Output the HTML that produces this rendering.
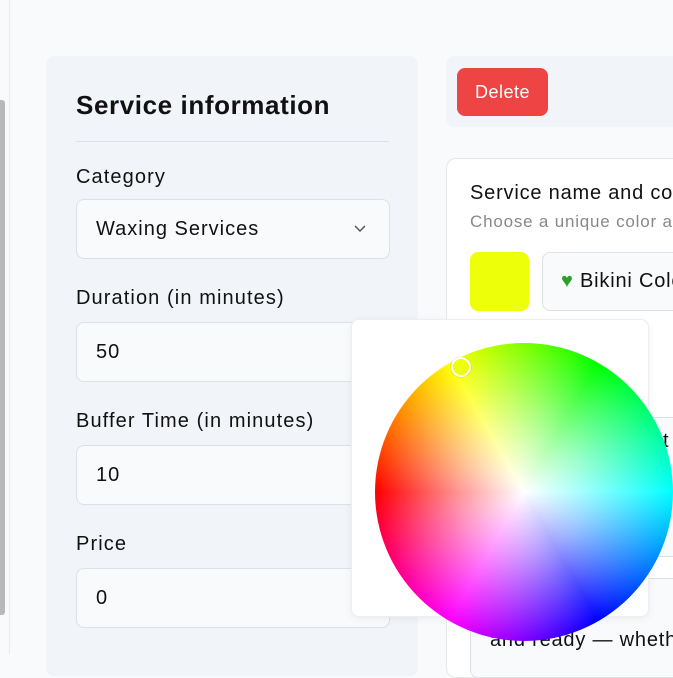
<!DOCTYPE html>
<html><head><meta charset="utf-8"><style>
*{box-sizing:border-box;margin:0;padding:0}
body{width:673px;height:654px;overflow:hidden;background:#f8fafc;font-family:"Liberation Sans",sans-serif;color:#111;position:relative}
.abs{position:absolute}
.lbl{position:absolute;left:76px;font-size:20px;color:#111;letter-spacing:1.1px;top:0}
.inp{position:absolute;left:76px;width:314px;height:60px;border:1px solid #dde1e7;border-radius:8px;background:#f8fafc;font-size:20px;padding-left:19px;line-height:58px;letter-spacing:1px}
</style></head><body>
<div class="abs" style="left:0;top:100px;width:5px;height:515px;background:#b8b8b8;border-radius:0 3px 3px 0"></div>
<div class="abs" style="left:9px;top:0;width:1px;height:654px;background:#e9ecef"></div>
<div class="abs" style="left:46px;top:56px;width:372px;height:620px;background:#f1f4f8;border-radius:8px"></div>
<div class="abs" style="left:76px;top:90px;font-size:26px;font-weight:bold;letter-spacing:0.6px">Service information</div>
<div class="abs" style="left:76px;top:141px;width:313px;height:1px;background:#dde1e7"></div>
<div class="lbl" style="top:166px">Category</div>
<div class="inp" style="top:199px">Waxing Services<svg class="abs" style="left:276px;top:24px" width="14" height="10" viewBox="0 0 14 10"><path d="M2 2l5 5 5-5" fill="none" stroke="#555" stroke-width="1.5"/></svg></div>
<div class="lbl" style="top:287px">Duration (in minutes)</div>
<div class="inp" style="top:322px">50</div>
<div class="lbl" style="top:410px">Buffer Time (in minutes)</div>
<div class="inp" style="top:445px">10</div>
<div class="lbl" style="top:533px">Price</div>
<div class="inp" style="top:568px">0</div>

<div class="abs" style="left:446px;top:56px;width:240px;height:71px;background:#f1f4f8;border-radius:8px"></div>
<div class="abs" style="left:457px;top:68px;width:91px;height:48px;background:#ef4444;border-radius:8px;color:#fff;font-size:18px;text-align:center;line-height:48px;letter-spacing:0.5px">Delete</div>

<div class="abs" style="left:446px;top:158px;width:240px;height:520px;background:#fff;border:1px solid #e5e7eb;border-radius:10px"></div>
<div class="abs" style="left:470px;top:182px;font-size:20px;white-space:nowrap;letter-spacing:0.8px">Service name and color</div>
<div class="abs" style="left:470px;top:212px;font-size:17px;color:#888;white-space:nowrap;letter-spacing:0.8px">Choose a unique color and</div>
<div class="abs" style="left:470px;top:252px;width:59px;height:59px;background:#eeff0a;border-radius:8px"></div>
<div class="abs" style="left:542px;top:252px;width:150px;height:59px;border:1px solid #dde1e7;border-radius:8px;background:#f8fafc;font-size:20px;line-height:57px;padding-left:18px;white-space:nowrap;letter-spacing:0.8px"><span style="color:#2ca02c">&#9829;</span> Bikini Color</div>
<div class="abs" style="left:600px;top:346px;font-size:20px">ion</div>
<div class="abs" style="left:600px;top:376px;font-size:17px;color:#888">se in</div>
<div class="abs" style="left:470px;top:417px;width:230px;height:140px;border:1px solid #dde1e7;border-radius:8px;background:#f8fafc"></div>
<div class="abs" style="left:663px;top:430px;font-size:20px">t</div>
<div class="abs" style="left:470px;top:578px;width:230px;height:100px;border:1px solid #dde1e7;border-radius:8px;background:#f8fafc"></div>
<div class="abs" style="left:490px;top:600px;font-size:20px;white-space:nowrap;letter-spacing:0.8px">Start with you</div>
<div class="abs" style="left:490px;top:629px;font-size:20px;white-space:nowrap;letter-spacing:0.8px">and ready — whether</div>

<div class="abs" style="left:351px;top:319px;width:298px;height:298px;background:#fff;border:1px solid #eceef1;border-radius:8px;box-shadow:0 2px 8px rgba(0,0,0,.06)"></div>
<div class="abs" style="left:375px;top:343px;width:298px;height:298px;border-radius:50%;background:conic-gradient(from 270deg,#f00,#ff0,#0f0,#0ff,#00f,#f0f,#f00)"></div>
<div class="abs" style="left:375px;top:343px;width:298px;height:298px;border-radius:50%;background:radial-gradient(circle,#fff 0%,rgba(255,255,255,.6) 30%,rgba(255,255,255,0) 70%)"></div>
<div class="abs" style="left:451px;top:357px;width:20px;height:20px;border-radius:50%;border:2px solid #fff;background:#eeff0a;box-shadow:0 0 1px rgba(0,0,0,.4)"></div>
</body></html>
